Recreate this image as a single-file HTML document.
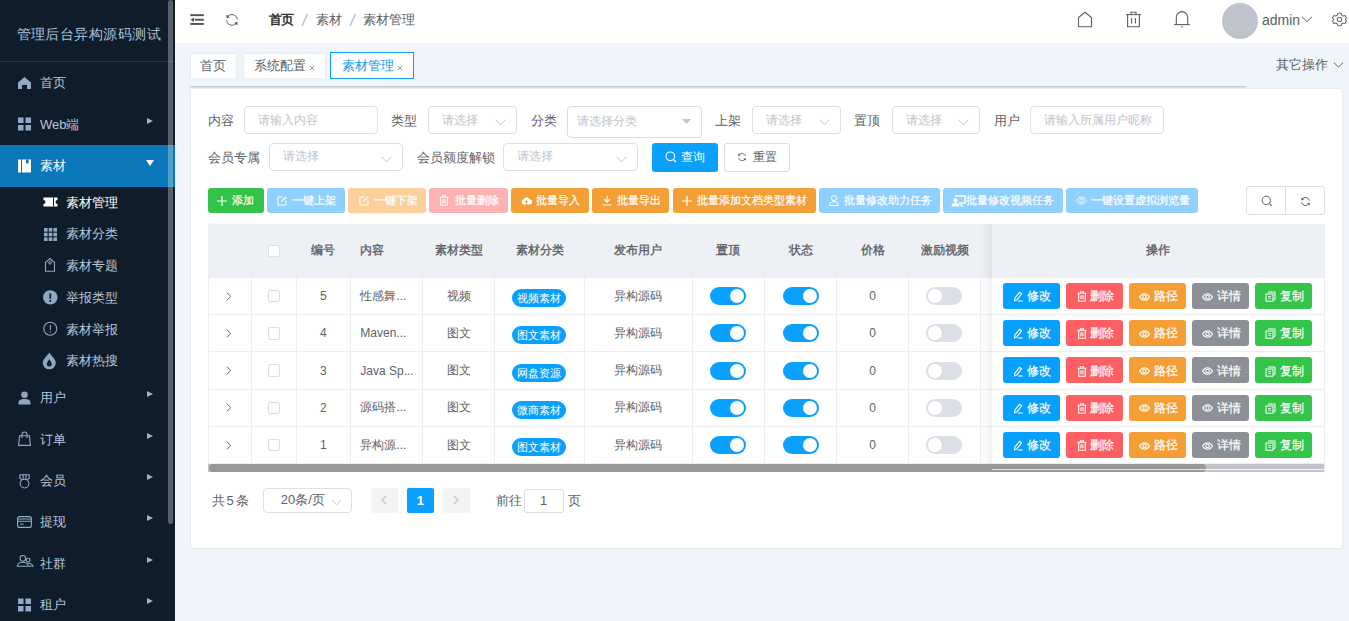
<!DOCTYPE html>
<html><head><meta charset="utf-8">
<style>
*{box-sizing:border-box;margin:0;padding:0}
html,body{width:1349px;height:621px;overflow:hidden}
body{position:relative;background:#f0f4fb;font-family:"Liberation Sans",sans-serif;font-size:13px;color:#606266}
.a{position:absolute}
.c{display:flex;align-items:center;justify-content:center}
.side{left:0;top:0;width:175px;height:621px;background:#0f1c2a}
.logo{left:0;top:20px;width:175px;height:28px;line-height:28px;padding-left:16.5px;font-size:14px;letter-spacing:0.45px;color:#adc3da;white-space:nowrap}
.divl{left:0;top:61px;width:175px;height:1px;background:#1e384e}
.mi{left:0;width:175px;height:41.4px;color:#b6c7d9;font-size:13px}
.mi .t{position:absolute;left:40px;top:0;height:100%;line-height:41.4px;white-space:nowrap}
.mi .ic{position:absolute;left:17px;top:50%;width:15px;height:14px;margin-top:-7px}
.mi .tri{position:absolute;left:146.5px;top:50%;width:0;height:0;margin-top:-6.5px;border-top:3.6px solid transparent;border-bottom:3.6px solid transparent;border-left:6px solid #9fb3c8}
.mi.act{background:#0a77bb;color:#fff}
.mi.act .tri{margin-top:-6px;border-left:4px solid transparent;border-right:4px solid transparent;border-top:6px solid #fff;border-bottom:0;left:146px}
.si{left:0;width:175px;height:31.75px;color:#b6c7d9;font-size:13px}
.si .t{position:absolute;left:65.5px;top:0;height:100%;line-height:31.75px;white-space:nowrap}
.si .ic{position:absolute;left:42.5px;top:50%;width:15px;height:14px;margin-top:-7px}
.si.act{color:#fff}
.sb{left:168px;top:0;width:5.2px;height:524px;border-radius:2.6px;background:rgba(255,255,255,0.3)}
.hdr{left:175px;top:0;width:1174px;height:43px;background:#fff}
.card{left:189.5px;top:88px;width:1153.7px;height:461px;background:#fff;border:1px solid #e8ecf2;border-radius:2px}
.bc span{color:#606266}.bc .sep{color:#c0c4cc;margin:0 7.5px;font-weight:normal}
.tg{background:#fff;border:1px solid #e9ecf0;color:#5a5e66;font-size:13px;display:flex;align-items:center;justify-content:center;white-space:nowrap}
.tg .x{margin-left:3px;margin-top:5px}
.tg.on{border-color:#0f9bf5;color:#0f9bf5}
.lb{height:18px;line-height:18px;margin-top:0.5px;font-size:13px;color:#606266;white-space:nowrap}
.inp{border:1px solid #dcdfe6;border-radius:4px;background:#fff;font-size:12px;color:#c0c4cc;white-space:nowrap;display:flex;align-items:center}
.inp span{padding-left:13px}
.inp.cas{border-color:#dcdcdc}
.inp .chev{position:absolute;right:10px;top:50%;margin-top:-1px}
.btn{font-size:12px;white-space:nowrap}
.tb{top:188.4px;height:24.4px;border-radius:3px;color:#fff;font-size:11px;white-space:nowrap}
.hl{height:1px;background:#ebeef5}
.vl{width:1px;background:#ebeef5}
.th{font-size:12px;font-weight:normal;color:#5c5f66;-webkit-text-stroke:0.35px #5c5f66;white-space:nowrap}
.td{font-size:12px;color:#606266;white-space:nowrap}
.cb{display:inline-block;width:12.5px;height:12.5px;border:1px solid #dcdfe6;border-radius:2px;background:#fff}
.pill{display:inline-block;height:18px;line-height:18px;padding:0 5px;border-radius:9px;background:#0aa1fe;color:#fff;font-size:11px;margin-top:4px;margin-left:-2px}
.sw{display:inline-block;position:relative;width:36px;height:18px;border-radius:9px;background:#dcdfe6}
.sw i{position:absolute;left:2px;top:2px;width:14px;height:14px;border-radius:50%;background:#fff}
.sw.on{background:#0aa1fe}.sw.on i{left:20px}
.ob{width:57px;height:26px;border-radius:3px;color:#fff;font-size:11.5px;white-space:nowrap;padding-top:1.5px}
.tb,.ob{-webkit-text-stroke:0.2px #fff}
</style></head><body>
<div class="a side">
  <div class="a logo">管理后台异构源码测试</div>
  <div class="a divl"></div>
<div class="a mi" style="top:62.4px"><svg class="ic" viewBox="0 0 15 14"><path d="M7.5 1 L14 6.5 V13 H10 V9 H5 V13 H1 V6.5 Z" fill="#8ea9c3"/></svg><span class="t">首页</span></div>
<div class="a mi" style="top:103.8px"><svg class="ic" viewBox="0 0 15 14"><rect x="1" y="0.5" width="5.5" height="5.5" fill="#8ea9c3"/><rect x="8.5" y="0.5" width="5.5" height="5.5" fill="#8ea9c3"/><rect x="1" y="8" width="5.5" height="5.5" fill="#8ea9c3"/><rect x="8.5" y="8" width="5.5" height="5.5" fill="#8ea9c3"/></svg><span class="t">Web端</span><span class="tri"></span></div>
<div class="a mi act" style="top:145.2px"><svg class="ic" viewBox="0 0 15 14"><rect x="1" y="0.5" width="3" height="13" fill="#fff"/><rect x="5" y="0.5" width="9" height="13" fill="#fff"/><path d="M9 0.5 V5 L10.3 3.8 L11.6 5 V0.5 Z" fill="#0a77bb"/></svg><span class="t">素材</span><span class="tri"></span></div>
<div class="a si act" style="top:186.6px"><svg class="ic" viewBox="0 0 15 14"><path d="M0.5 2.5 H14.5 V5 A2 2 0 0 0 14.5 9 V11.5 H0.5 V9 A2 2 0 0 0 0.5 5 Z" fill="#fff"/><rect x="10" y="2.5" width="1" height="9" fill="#0f1c2a"/></svg><span class="t">素材管理</span></div>
<div class="a si" style="top:218.35px"><svg class="ic" viewBox="0 0 15 14"><g fill="#8ea9c3"><rect x="1" y="1" width="3.6" height="3.6"/><rect x="5.7" y="1" width="3.6" height="3.6"/><rect x="10.4" y="1" width="3.6" height="3.6"/><rect x="1" y="5.7" width="3.6" height="3.6"/><rect x="5.7" y="5.7" width="3.6" height="3.6"/><rect x="10.4" y="5.7" width="3.6" height="3.6"/><rect x="1" y="10.4" width="3.6" height="3.6"/><rect x="5.7" y="10.4" width="3.6" height="3.6"/><rect x="10.4" y="10.4" width="3.6" height="3.6"/></g></svg><span class="t">素材分类</span></div>
<div class="a si" style="top:250.1px"><svg class="ic" viewBox="0 0 15 14" style="overflow:visible"><path d="M2.5 12.3 V3.5 L7 -0.5 L11.5 3.5 V12.3 Z" fill="none" stroke="#8ea9c3" stroke-width="1.1"/><circle cx="7" cy="3.8" r="1.3" fill="none" stroke="#8ea9c3" stroke-width="1"/></svg><span class="t">素材专题</span></div>
<div class="a si" style="top:281.85px"><svg class="ic" viewBox="0 0 15 14" style="overflow:visible"><circle cx="7.3" cy="6.4" r="7.2" fill="#8ea9c3"/><rect x="6.4" y="2.4" width="1.8" height="5.4" fill="#0f1c2a"/><rect x="6.4" y="9" width="1.8" height="1.8" fill="#0f1c2a"/></svg><span class="t">举报类型</span></div>
<div class="a si" style="top:313.6px"><svg class="ic" viewBox="0 0 15 14" style="overflow:visible"><circle cx="7.3" cy="6.8" r="6.5" fill="none" stroke="#8ea9c3" stroke-width="1.1"/><rect x="6.8" y="3" width="1.1" height="5" fill="#8ea9c3"/><rect x="6.8" y="9.2" width="1.1" height="1.3" fill="#8ea9c3"/></svg><span class="t">素材举报</span></div>
<div class="a si" style="top:345.35px"><svg class="ic" viewBox="0 0 15 14" style="overflow:visible"><path d="M6.3 -1.5 C8 1.5 12.8 5 12.8 9 A6.5 6.3 0 0 1 -0.2 9 C-0.2 5 4.6 1.5 6.3 -1.5 Z" fill="#8ea9c3"/><path d="M6.3 5.2 C7.3 7 8.8 8.3 8.8 10 A2.5 2.5 0 0 1 3.8 10 C3.8 8.3 5.3 7 6.3 5.2Z" fill="#0f1c2a"/></svg><span class="t">素材热搜</span></div>
<div class="a mi" style="top:377.1px"><svg class="ic" viewBox="0 0 15 14"><circle cx="7.5" cy="3.8" r="3.3" fill="#8ea9c3"/><path d="M1.5 13.5 V11.5 C1.5 9 4 8 7.5 8 C11 8 13.5 9 13.5 11.5 V13.5 Z" fill="#8ea9c3"/></svg><span class="t">用户</span><span class="tri"></span></div>
<div class="a mi" style="top:418.5px"><svg class="ic" viewBox="0 0 15 14" style="overflow:visible"><path d="M2.6 3.8 H12.4 L13.4 13.4 H1.6 Z" fill="none" stroke="#8ea9c3" stroke-width="1.1" stroke-linejoin="round"/><path d="M5 6 V2.6 A2.5 2.6 0 0 1 10 2.6 V6" fill="none" stroke="#8ea9c3" stroke-width="1.1"/></svg><span class="t">订单</span><span class="tri"></span></div>
<div class="a mi" style="top:459.9px"><svg class="ic" viewBox="0 0 15 14" style="overflow:visible"><path d="M2.8 0.8 H12.2 V4.2 L9.8 6.2 M2.8 0.8 V4.2 L5.2 6.2 M6.1 0.8 V5 M8.9 0.8 V5" fill="none" stroke="#8ea9c3" stroke-width="1.1"/><circle cx="7.5" cy="9.6" r="4.4" fill="none" stroke="#8ea9c3" stroke-width="1.1"/></svg><span class="t">会员</span><span class="tri"></span></div>
<div class="a mi" style="top:501.3px"><svg class="ic" viewBox="0 0 15 14" style="overflow:visible"><rect x="0.6" y="1.6" width="13.8" height="10.8" rx="2" fill="none" stroke="#8ea9c3" stroke-width="1.1"/><path d="M0.6 4 H14.4 M0.6 6.3 H14.4 M3 9.1 H6.5" stroke="#8ea9c3" stroke-width="1"/></svg><span class="t">提现</span><span class="tri"></span></div>
<div class="a mi" style="top:542.7px"><svg class="ic" viewBox="0 0 15 14" style="overflow:visible"><circle cx="5.8" cy="2.3" r="2.8" fill="none" stroke="#8ea9c3" stroke-width="1.1"/><path d="M0.2 10.2 C0.8 7.4 3 6.3 5.8 6.3 C8.6 6.3 10.8 7.4 11.4 10.2 Z" fill="none" stroke="#8ea9c3" stroke-width="1.1" stroke-linejoin="round"/><circle cx="11.2" cy="4.2" r="1.9" fill="none" stroke="#8ea9c3" stroke-width="1.1"/><path d="M11 7.3 C13.6 7.5 15.4 8.5 15.9 10.2 H12" fill="none" stroke="#8ea9c3" stroke-width="1.1"/></svg><span class="t">社群</span><span class="tri"></span></div>
<div class="a mi" style="top:584.1px"><svg class="ic" viewBox="0 0 15 14"><rect x="1" y="0.5" width="5.5" height="5.5" fill="#8ea9c3"/><rect x="8.5" y="0.5" width="5.5" height="5.5" fill="#8ea9c3"/><rect x="1" y="8" width="5.5" height="5.5" fill="#8ea9c3"/><rect x="8.5" y="8" width="5.5" height="5.5" fill="#8ea9c3"/></svg><span class="t">租户</span><span class="tri"></span></div>
<div class="a sb"></div>
</div>
<div class="a hdr"></div>
<svg class="a" style="left:189px;top:12px" width="16" height="15" viewBox="0 0 16 15"><g fill="#505359"><rect x="1.3" y="2.2" width="13.5" height="1.9"/><rect x="5.7" y="6.8" width="9.1" height="1.9"/><rect x="1.3" y="11" width="13.5" height="1.9"/><path d="M1.5 7.75 L5 5.5 V10 Z"/></g></svg>
<svg class="a" style="left:224px;top:12px" width="16" height="16" viewBox="0 0 16 16"><g fill="none" stroke="#5a5d63" stroke-width="0.95"><path d="M3.4 4.6 A5.8 5.8 0 0 1 13.6 7.4"/><path d="M12.6 11.2 A5.8 5.8 0 0 1 2.4 8.4"/></g><path d="M2.4 2.6 L2.6 6.2 L5.9 5.2 Z" fill="#5a5d63"/><path d="M13.6 13.4 L13.4 9.8 L10.1 10.8 Z" fill="#5a5d63"/></svg>
<div class="a" style="left:268.5px;top:11px;height:18px;line-height:18px;font-size:13px;color:#303133;font-weight:bold;letter-spacing:-0.5px">首页</div>
<svg class="a" style="left:300px;top:13px" width="10" height="14" viewBox="0 0 10 14"><path d="M2 13 L7.5 1" stroke="#c0c4cc" stroke-width="1.6"/></svg>
<div class="a" style="left:315.5px;top:11px;height:18px;line-height:18px;font-size:13px;color:#606266">素材</div>
<svg class="a" style="left:347.5px;top:13px" width="10" height="14" viewBox="0 0 10 14"><path d="M2 13 L7.5 1" stroke="#c0c4cc" stroke-width="1.6"/></svg>
<div class="a" style="left:362.5px;top:11px;height:18px;line-height:18px;font-size:13px;color:#606266;white-space:nowrap">素材管理</div>
<svg class="a" style="left:1077px;top:11px" width="16" height="17" viewBox="0 0 16 17"><path d="M1.5 15.7 V6.5 L8 1.2 L14.5 6.5 V15.7 Z" fill="none" stroke="#5c5f66" stroke-width="1.1"/></svg>
<svg class="a" style="left:1125px;top:11px" width="17" height="17" viewBox="0 0 17 17"><g fill="none" stroke="#5c5f66" stroke-width="1.1"><path d="M1 3.6 H16"/><path d="M6 3.6 V1.3 H11 V3.6"/><path d="M2.6 3.6 V15.7 H14.4 V3.6"/><path d="M6.6 7 V12.5 M10.4 7 V12.5"/></g></svg>
<svg class="a" style="left:1173px;top:10px" width="18" height="18" viewBox="0 0 18 18"><g fill="none" stroke="#5c5f66" stroke-width="1.1"><path d="M3.3 14.6 V7.5 A5.7 5.9 0 0 1 14.7 7.5 V14.6"/><path d="M1.2 14.6 H16.8"/><path d="M9 0.8 V1.8"/></g><rect x="8.3" y="16.2" width="1.4" height="1.2" fill="#5c5f66"/></svg>
<div class="a" style="left:1221.6px;top:3px;width:36px;height:36px;border-radius:50%;background:#bfc3cb"></div>
<div class="a" style="left:1262px;top:10px;height:20px;line-height:20px;font-size:14px;color:#5a5e66">admin</div>
<svg class="a" style="left:1301px;top:15px" width="12" height="8" viewBox="0 0 12 8"><path d="M1 1.8 L6 6.6 L11 1.8" fill="none" stroke="#606266" stroke-width="1"/></svg>
<svg class="a" style="left:1332px;top:12px" width="15" height="15" viewBox="0 0 15 15"><path fill="none" stroke="#6a6d73" stroke-width="1.1" stroke-linejoin="round" d="M6 1.2 H9 L9.6 3.1 L11.2 4 L13.1 3.5 L14.5 6 L13.2 7.5 L14.5 9 L13.1 11.5 L11.2 11 L9.6 11.9 L9 13.8 H6 L5.4 11.9 L3.8 11 L1.9 11.5 L0.5 9 L1.8 7.5 L0.5 6 L1.9 3.5 L3.8 4 L5.4 3.1 Z"/><circle cx="7.5" cy="7.5" r="2.2" fill="none" stroke="#6a6d73" stroke-width="1.1"/></svg>
<!-- tags -->
<div class="a tg" style="left:189.6px;top:52.5px;width:47px;height:26px">首页</div>
<div class="a tg" style="left:242.6px;top:52.5px;width:83px;height:26px;padding-left:1px">系统配置<svg class="x" width="6" height="6" viewBox="0 0 6 6"><path d="M1 1 L5 5 M5 1 L1 5" stroke="#8c9099" stroke-width="0.9"/></svg></div>
<div class="a tg on" style="left:330px;top:52px;width:84px;height:27px;padding-left:1px">素材管理<svg class="x" width="6" height="6" viewBox="0 0 6 6"><path d="M1 1 L5 5 M5 1 L1 5" stroke="#8c9099" stroke-width="0.9"/></svg></div>
<div class="a" style="left:189.5px;top:85.5px;width:1056.5px;height:1px;background:#c6c9cf"></div><div class="a" style="left:189.5px;top:86.5px;width:1056.5px;height:1px;background:#dcdfe4"></div>
<div class="a" style="left:1276px;top:56px;height:18px;line-height:18px;font-size:13px;color:#5a5e66;white-space:nowrap">其它操作<svg style="position:absolute;left:57px;top:5px" width="11" height="8" viewBox="0 0 11 8"><path d="M1 1.8 L5.5 6 L10 1.8" fill="none" stroke="#606266" stroke-width="1"/></svg></div>
<div class="a card"></div>
<div class="a lb" style="left:207.5px;top:111px">内容</div>
<div class="a inp" style="left:244.2px;top:106.3px;width:134.2px;height:28.1px"><span>请输入内容</span></div>
<div class="a lb" style="left:391px;top:111px">类型</div>
<div class="a inp" style="left:428.4px;top:106.3px;width:88.9px;height:28.1px"><span>请选择</span><svg class="chev" width="11" height="7" viewBox="0 0 11 7"><path d="M0.7 0.7 L5.5 5.8 L10.3 0.7" fill="none" stroke="#c0c4cc" stroke-width="1"/></svg></div>
<div class="a lb" style="left:530.5px;top:111px">分类</div>
<div class="a inp cas" style="left:567.4px;top:106.2px;width:134.4px;height:31.5px"><span style="padding-left:9px">请选择分类</span><svg class="chev" style="right:10px;margin-top:-2.5px" width="9" height="5" viewBox="0 0 9 5"><path d="M0 0 H9 L4.5 5 Z" fill="#c0c4cc"/></svg></div>
<div class="a lb" style="left:715px;top:111px">上架</div>
<div class="a inp" style="left:751.6px;top:106.3px;width:89.0px;height:28.1px"><span>请选择</span><svg class="chev" width="11" height="7" viewBox="0 0 11 7"><path d="M0.7 0.7 L5.5 5.8 L10.3 0.7" fill="none" stroke="#c0c4cc" stroke-width="1"/></svg></div>
<div class="a lb" style="left:854px;top:111px">置顶</div>
<div class="a inp" style="left:891.5px;top:106.3px;width:88.9px;height:28.1px"><span>请选择</span><svg class="chev" width="11" height="7" viewBox="0 0 11 7"><path d="M0.7 0.7 L5.5 5.8 L10.3 0.7" fill="none" stroke="#c0c4cc" stroke-width="1"/></svg></div>
<div class="a lb" style="left:993.5px;top:111px">用户</div>
<div class="a inp" style="left:1030.2px;top:106.3px;width:134.2px;height:28.1px"><span>请输入所属用户昵称</span></div>
<div class="a lb" style="left:207.5px;top:148px">会员专属</div>
<div class="a inp" style="left:269.3px;top:143.3px;width:134.2px;height:27.3px"><span>请选择</span><svg class="chev" width="11" height="7" viewBox="0 0 11 7"><path d="M0.7 0.7 L5.5 5.8 L10.3 0.7" fill="none" stroke="#c0c4cc" stroke-width="1"/></svg></div>
<div class="a lb" style="left:417px;top:148px">会员额度解锁</div>
<div class="a inp" style="left:503.2px;top:143.3px;width:134.6px;height:27.3px"><span>请选择</span><svg class="chev" width="11" height="7" viewBox="0 0 11 7"><path d="M0.7 0.7 L5.5 5.8 L10.3 0.7" fill="none" stroke="#c0c4cc" stroke-width="1"/></svg></div>
<div class="a btn c" style="left:652px;top:143px;width:66px;height:28.5px;background:#0aa1fe;color:#fff;border-radius:3px"><svg width="12" height="12" viewBox="0 0 12 12" style="margin-right:4.5px"><circle cx="5.3" cy="5.3" r="4.3" fill="none" stroke="#fff" stroke-width="1.1"/><path d="M8.4 8.4 L11 11" stroke="#fff" stroke-width="1.2"/></svg>查询</div>
<div class="a btn c" style="left:724px;top:143px;width:66px;height:28.5px;background:#fff;color:#606266;border:1px solid #dcdfe6;border-radius:3px"><svg width="10" height="10" viewBox="0 0 10 10" style="margin-right:5.5px"><g fill="none" stroke="#606266" stroke-width="0.9"><path d="M1.8 3 A3.8 3.8 0 0 1 8.6 4.2"/><path d="M8.2 7 A3.8 3.8 0 0 1 1.4 5.8"/></g><path d="M1 1.3 L1.4 4 L3.7 3.2Z M9 8.7 L8.6 6 L6.3 6.8Z" fill="#606266"/></svg>重置</div>
<div class="a tb c" style="left:208.3px;width:55.3px;background:#34c34a"><svg width="10" height="10" viewBox="0 0 10 10" style="margin-right:5px"><path d="M5 0 V10 M0 5 H10" stroke="#fff" stroke-width="1.2"/></svg>添加</div>
<div class="a tb c" style="left:267.1px;width:78.3px;background:#90d0fe"><svg width="10" height="10" viewBox="0 0 10 10" style="margin-right:5px;margin-left:1.5px"><path d="M5.5 1 H1 V9 H9 V4.5" fill="none" stroke="#fff" stroke-width="1"/><path d="M4.3 5.7 L9 1" stroke="#fff" stroke-width="1.2"/></svg>一键上架</div>
<div class="a tb c" style="left:348.3px;width:78.2px;background:#fbd09c"><svg width="10" height="10" viewBox="0 0 10 10" style="margin-right:5px;margin-left:1.5px"><path d="M5.5 1 H1 V9 H9 V4.5" fill="none" stroke="#fff" stroke-width="1"/><path d="M4.3 5.7 L9 1" stroke="#fff" stroke-width="1.2"/></svg>一键下架</div>
<div class="a tb c" style="left:429.4px;width:78.3px;background:#fdb2b4"><svg width="10" height="11" viewBox="0 0 10 11" style="margin-right:6px"><g fill="none" stroke="#fff" stroke-width="1"><path d="M0.5 2.2 H9.5 M3.5 2.2 V0.7 H6.5 V2.2 M1.7 2.2 V10.3 H8.3 V2.2 M4 4.2 V8.5 M6 4.2 V8.5"/></g></svg>批量删除</div>
<div class="a tb c" style="left:511.4px;width:77.3px;background:#f49e36"><svg width="11" height="9" viewBox="0 0 12 10" style="margin-right:4.5px;margin-left:0.5px"><path d="M3 9.5 A2.8 2.8 0 0 1 2.6 4 A3.6 3.6 0 0 1 9.4 3.6 A2.9 2.9 0 0 1 9.2 9.5 Z" fill="#fff"/><path d="M6 4.5 L4 6.6 H5.4 V9.5 H6.6 V6.6 H8 Z" fill="#f49e35"/></svg>批量导入</div>
<div class="a tb c" style="left:592px;width:77.4px;background:#f49e36"><svg width="10" height="11" viewBox="0 0 10 11" style="margin-right:5px;margin-left:1.5px"><path d="M5 0.5 V7 M2 4.2 L5 7.2 L8 4.2 M0.5 10 H9.5" fill="none" stroke="#fff" stroke-width="1.1"/></svg>批量导出</div>
<div class="a tb c" style="left:673.2px;width:142.5px;background:#f49e36"><svg width="10" height="10" viewBox="0 0 10 10" style="margin-right:5px"><path d="M5 0 V10 M0 5 H10" stroke="#fff" stroke-width="1.2"/></svg>批量添加文档类型素材</div>
<div class="a tb c" style="left:819px;width:120.8px;background:#90d0fe"><svg width="10" height="11" viewBox="0 0 10 11" style="margin-right:4.5px;margin-left:2px"><circle cx="5" cy="3.2" r="2.6" fill="none" stroke="#fff" stroke-width="1"/><path d="M0.7 10.5 C0.7 7.8 2.5 6.6 5 6.6 C7.5 6.6 9.3 7.8 9.3 10.5 Z" fill="none" stroke="#fff" stroke-width="1"/></svg>批量修改助力任务</div>
<div class="a tb c" style="left:943.3px;width:119.3px;background:#90d0fe"><svg width="15" height="12" viewBox="0 0 15 12" style="margin-right:0px"><path d="M4 1 H14 V8 H8" fill="none" stroke="#fff" stroke-width="1.5"/><circle cx="4.5" cy="5.3" r="2.2" fill="#fff"/><path d="M0.5 11.5 C0.5 8.8 2 8 4.5 8 C7 8 8.5 8.8 8.5 11.5 Z" fill="#fff"/><path d="M10 8 V11 H13" fill="none" stroke="#fff" stroke-width="1.2"/></svg>批量修改视频任务</div>
<div class="a tb c" style="left:1066.2px;width:131.6px;background:#90d0fe"><svg width="11" height="9" viewBox="0 0 12 10" style="margin-right:4.5px;margin-left:2px"><path d="M0.6 5 C2 2 4 1.2 6 1.2 C8 1.2 10 2 11.4 5 C10 8 8 8.8 6 8.8 C4 8.8 2 8 0.6 5 Z" fill="none" stroke="#fff" stroke-width="1"/><circle cx="6" cy="5" r="2" fill="none" stroke="#fff" stroke-width="1"/></svg>一键设置虚拟浏览量</div>
<div class="a" style="left:1246.4px;top:186.2px;width:78.4px;height:28.4px;border:1px solid #dcdfe6;border-radius:3px"><div class="a" style="left:38px;top:0;width:1px;height:100%;background:#dcdfe6"></div><svg class="a" style="left:14px;top:8px" width="12" height="12" viewBox="0 0 12 12"><circle cx="5.3" cy="5.3" r="4.2" fill="none" stroke="#606266" stroke-width="1"/><path d="M8.3 8.3 L10.8 10.8" stroke="#606266" stroke-width="1.1"/></svg><svg class="a" style="left:53px;top:8.5px" width="11" height="11" viewBox="0 0 10 10"><g fill="none" stroke="#606266" stroke-width="0.9"><path d="M1.8 3 A3.8 3.8 0 0 1 8.6 4.2"/><path d="M8.2 7 A3.8 3.8 0 0 1 1.4 5.8"/></g><path d="M1 1.3 L1.4 4 L3.7 3.2Z M9 8.7 L8.6 6 L6.3 6.8Z" fill="#606266"/></svg></div>
<div class="a" style="left:208.2px;top:224.3px;width:1116.3px;height:53.2px;background:#edf0f5"></div>
<div class="a hl" style="left:208.2px;top:277.00px;width:1116.3px"></div>
<div class="a hl" style="left:208.2px;top:314.24px;width:1116.3px"></div>
<div class="a hl" style="left:208.2px;top:351.48px;width:1116.3px"></div>
<div class="a hl" style="left:208.2px;top:388.72px;width:1116.3px"></div>
<div class="a hl" style="left:208.2px;top:425.96px;width:1116.3px"></div>
<div class="a hl" style="left:208.2px;top:463.20px;width:1116.3px"></div>
<div class="a vl" style="left:251.10px;top:224.3px;height:239.4px"></div>
<div class="a vl" style="left:295.80px;top:224.3px;height:239.4px"></div>
<div class="a vl" style="left:349.80px;top:224.3px;height:239.4px"></div>
<div class="a vl" style="left:421.90px;top:224.3px;height:239.4px"></div>
<div class="a vl" style="left:494.20px;top:224.3px;height:239.4px"></div>
<div class="a vl" style="left:584.00px;top:224.3px;height:239.4px"></div>
<div class="a vl" style="left:691.90px;top:224.3px;height:239.4px"></div>
<div class="a vl" style="left:764.10px;top:224.3px;height:239.4px"></div>
<div class="a vl" style="left:836.20px;top:224.3px;height:239.4px"></div>
<div class="a vl" style="left:908.10px;top:224.3px;height:239.4px"></div>
<div class="a vl" style="left:980.10px;top:224.3px;height:239.4px"></div>
<div class="a vl" style="left:1059.50px;top:224.3px;height:239.4px"></div>
<div class="a vl" style="left:1139.50px;top:224.3px;height:239.4px"></div>
<div class="a vl" style="left:207.70px;top:277.5px;height:186.2px"></div>
<div class="a th c" style="left:208.2px;top:224.30px;width:43.4px;height:53.20px"></div>
<div class="a th c" style="left:251.6px;top:224.30px;width:44.7px;height:53.20px"><span class="cb"></span></div>
<div class="a th c" style="left:296.3px;top:224.30px;width:54.0px;height:53.20px">编号</div>
<div class="a th" style="left:360.3px;top:224.30px;width:62.1px;height:53.20px;display:flex;align-items:center">内容</div>
<div class="a th c" style="left:422.4px;top:224.30px;width:72.3px;height:53.20px">素材类型</div>
<div class="a th c" style="left:494.7px;top:224.30px;width:89.8px;height:53.20px">素材分类</div>
<div class="a th c" style="left:584.5px;top:224.30px;width:107.9px;height:53.20px">发布用户</div>
<div class="a th c" style="left:692.4px;top:224.30px;width:72.2px;height:53.20px">置顶</div>
<div class="a th c" style="left:764.6px;top:224.30px;width:72.1px;height:53.20px">状态</div>
<div class="a th c" style="left:836.7px;top:224.30px;width:71.9px;height:53.20px">价格</div>
<div class="a th c" style="left:908.6px;top:224.30px;width:72.0px;height:53.20px">激励视频</div>
<div class="a td c" style="left:208.2px;top:277.50px;width:43.4px;height:37.24px"><svg width="6" height="9" viewBox="0 0 6 9" style="margin-left:-2px"><path d="M0.8 0.8 L4.8 4.5 L0.8 8.2" fill="none" stroke="#606266" stroke-width="0.9"/></svg></div>
<div class="a td c" style="left:251.6px;top:277.50px;width:44.7px;height:37.24px"><span class="cb"></span></div>
<div class="a td c" style="left:296.3px;top:277.50px;width:54.0px;height:37.24px">5</div>
<div class="a td" style="left:360.3px;top:277.50px;width:62.1px;height:37.24px;display:flex;align-items:center">性感舞...</div>
<div class="a td c" style="left:422.4px;top:277.50px;width:72.3px;height:37.24px">视频</div>
<div class="a td c" style="left:494.7px;top:277.50px;width:89.8px;height:37.24px"><span class="pill">视频素材</span></div>
<div class="a td c" style="left:584.5px;top:277.50px;width:107.9px;height:37.24px">异构源码</div>
<div class="a td c" style="left:692.4px;top:277.50px;width:72.2px;height:37.24px"><span class="sw on"><i></i></span></div>
<div class="a td c" style="left:764.6px;top:277.50px;width:72.1px;height:37.24px"><span class="sw on"><i></i></span></div>
<div class="a td c" style="left:836.7px;top:277.50px;width:71.9px;height:37.24px">0</div>
<div class="a td c" style="left:908.6px;top:277.50px;width:72.0px;height:37.24px"><span class="sw" style="margin-left:-2px"><i></i></span></div>
<div class="a td c" style="left:208.2px;top:314.74px;width:43.4px;height:37.24px"><svg width="6" height="9" viewBox="0 0 6 9" style="margin-left:-2px"><path d="M0.8 0.8 L4.8 4.5 L0.8 8.2" fill="none" stroke="#606266" stroke-width="0.9"/></svg></div>
<div class="a td c" style="left:251.6px;top:314.74px;width:44.7px;height:37.24px"><span class="cb"></span></div>
<div class="a td c" style="left:296.3px;top:314.74px;width:54.0px;height:37.24px">4</div>
<div class="a td" style="left:360.3px;top:314.74px;width:62.1px;height:37.24px;display:flex;align-items:center">Maven...</div>
<div class="a td c" style="left:422.4px;top:314.74px;width:72.3px;height:37.24px">图文</div>
<div class="a td c" style="left:494.7px;top:314.74px;width:89.8px;height:37.24px"><span class="pill">图文素材</span></div>
<div class="a td c" style="left:584.5px;top:314.74px;width:107.9px;height:37.24px">异构源码</div>
<div class="a td c" style="left:692.4px;top:314.74px;width:72.2px;height:37.24px"><span class="sw on"><i></i></span></div>
<div class="a td c" style="left:764.6px;top:314.74px;width:72.1px;height:37.24px"><span class="sw on"><i></i></span></div>
<div class="a td c" style="left:836.7px;top:314.74px;width:71.9px;height:37.24px">0</div>
<div class="a td c" style="left:908.6px;top:314.74px;width:72.0px;height:37.24px"><span class="sw" style="margin-left:-2px"><i></i></span></div>
<div class="a td c" style="left:208.2px;top:351.98px;width:43.4px;height:37.24px"><svg width="6" height="9" viewBox="0 0 6 9" style="margin-left:-2px"><path d="M0.8 0.8 L4.8 4.5 L0.8 8.2" fill="none" stroke="#606266" stroke-width="0.9"/></svg></div>
<div class="a td c" style="left:251.6px;top:351.98px;width:44.7px;height:37.24px"><span class="cb"></span></div>
<div class="a td c" style="left:296.3px;top:351.98px;width:54.0px;height:37.24px">3</div>
<div class="a td" style="left:360.3px;top:351.98px;width:62.1px;height:37.24px;display:flex;align-items:center">Java Sp...</div>
<div class="a td c" style="left:422.4px;top:351.98px;width:72.3px;height:37.24px">图文</div>
<div class="a td c" style="left:494.7px;top:351.98px;width:89.8px;height:37.24px"><span class="pill">网盘资源</span></div>
<div class="a td c" style="left:584.5px;top:351.98px;width:107.9px;height:37.24px">异构源码</div>
<div class="a td c" style="left:692.4px;top:351.98px;width:72.2px;height:37.24px"><span class="sw on"><i></i></span></div>
<div class="a td c" style="left:764.6px;top:351.98px;width:72.1px;height:37.24px"><span class="sw on"><i></i></span></div>
<div class="a td c" style="left:836.7px;top:351.98px;width:71.9px;height:37.24px">0</div>
<div class="a td c" style="left:908.6px;top:351.98px;width:72.0px;height:37.24px"><span class="sw" style="margin-left:-2px"><i></i></span></div>
<div class="a td c" style="left:208.2px;top:389.22px;width:43.4px;height:37.24px"><svg width="6" height="9" viewBox="0 0 6 9" style="margin-left:-2px"><path d="M0.8 0.8 L4.8 4.5 L0.8 8.2" fill="none" stroke="#606266" stroke-width="0.9"/></svg></div>
<div class="a td c" style="left:251.6px;top:389.22px;width:44.7px;height:37.24px"><span class="cb"></span></div>
<div class="a td c" style="left:296.3px;top:389.22px;width:54.0px;height:37.24px">2</div>
<div class="a td" style="left:360.3px;top:389.22px;width:62.1px;height:37.24px;display:flex;align-items:center">源码搭...</div>
<div class="a td c" style="left:422.4px;top:389.22px;width:72.3px;height:37.24px">图文</div>
<div class="a td c" style="left:494.7px;top:389.22px;width:89.8px;height:37.24px"><span class="pill">微商素材</span></div>
<div class="a td c" style="left:584.5px;top:389.22px;width:107.9px;height:37.24px">异构源码</div>
<div class="a td c" style="left:692.4px;top:389.22px;width:72.2px;height:37.24px"><span class="sw on"><i></i></span></div>
<div class="a td c" style="left:764.6px;top:389.22px;width:72.1px;height:37.24px"><span class="sw on"><i></i></span></div>
<div class="a td c" style="left:836.7px;top:389.22px;width:71.9px;height:37.24px">0</div>
<div class="a td c" style="left:908.6px;top:389.22px;width:72.0px;height:37.24px"><span class="sw" style="margin-left:-2px"><i></i></span></div>
<div class="a td c" style="left:208.2px;top:426.46px;width:43.4px;height:37.24px"><svg width="6" height="9" viewBox="0 0 6 9" style="margin-left:-2px"><path d="M0.8 0.8 L4.8 4.5 L0.8 8.2" fill="none" stroke="#606266" stroke-width="0.9"/></svg></div>
<div class="a td c" style="left:251.6px;top:426.46px;width:44.7px;height:37.24px"><span class="cb"></span></div>
<div class="a td c" style="left:296.3px;top:426.46px;width:54.0px;height:37.24px">1</div>
<div class="a td" style="left:360.3px;top:426.46px;width:62.1px;height:37.24px;display:flex;align-items:center">异构源...</div>
<div class="a td c" style="left:422.4px;top:426.46px;width:72.3px;height:37.24px">图文</div>
<div class="a td c" style="left:494.7px;top:426.46px;width:89.8px;height:37.24px"><span class="pill">图文素材</span></div>
<div class="a td c" style="left:584.5px;top:426.46px;width:107.9px;height:37.24px">异构源码</div>
<div class="a td c" style="left:692.4px;top:426.46px;width:72.2px;height:37.24px"><span class="sw on"><i></i></span></div>
<div class="a td c" style="left:764.6px;top:426.46px;width:72.1px;height:37.24px"><span class="sw on"><i></i></span></div>
<div class="a td c" style="left:836.7px;top:426.46px;width:71.9px;height:37.24px">0</div>
<div class="a td c" style="left:908.6px;top:426.46px;width:72.0px;height:37.24px"><span class="sw" style="margin-left:-2px"><i></i></span></div>
<div class="a" style="left:992px;top:224.3px;width:332.5px;height:240.4px;background:#fff"></div>
<div class="a" style="left:981px;top:224.3px;width:11px;height:247.5px;background:linear-gradient(to right,rgba(0,0,0,0),rgba(0,0,0,0.06))"></div>
<div class="a" style="left:992px;top:224.3px;width:332.5px;height:53.2px;background:#edf0f5"></div>
<div class="a hl" style="left:992px;top:314.24px;width:332.5px"></div>
<div class="a hl" style="left:992px;top:351.48px;width:332.5px"></div>
<div class="a hl" style="left:992px;top:388.72px;width:332.5px"></div>
<div class="a hl" style="left:992px;top:425.96px;width:332.5px"></div>
<div class="a hl" style="left:992px;top:463.20px;width:332.5px"></div>
<div class="a hl" style="left:992px;top:277.00px;width:332.5px"></div>
<div class="a th c" style="left:992px;top:224.30px;width:332.5px;height:53.20px">操作</div>
<div class="a ob c" style="left:1002.8px;top:282.90px;background:#08a0fe"><svg width="11" height="11" viewBox="0 0 11 11" style="margin-right:3.5px;margin-left:1.5px"><path d="M1.6 9.8 L1.7 7.4 L6.6 1.2 L8.6 2.8 L3.7 9 Z" fill="none" stroke="#fff" stroke-width="1.1"/><path d="M5.2 10 H9.6" stroke="#fff" stroke-width="1.1"/></svg>修改</div>
<div class="a ob c" style="left:1066.1px;top:282.90px;background:#fe5f63"><svg width="10" height="11" viewBox="0 0 10 11" style="margin-right:3.5px;margin-left:1.5px"><g fill="none" stroke="#fff" stroke-width="1.1"><path d="M0.5 2.3 H9.5 M3.5 2.3 V0.8 H6.5 V2.3 M1.7 2.3 V10.3 H8.3 V2.3 M4 4.3 V8.3 M6 4.3 V8.3"/></g></svg>删除</div>
<div class="a ob c" style="left:1128.9px;top:282.90px;background:#f49e36"><svg width="11" height="8" viewBox="0 0 11 8" style="margin-right:4px;margin-left:1.5px"><path d="M0.6 4 C2 1.4 3.8 0.7 5.5 0.7 C7.2 0.7 9 1.4 10.4 4 C9 6.6 7.2 7.3 5.5 7.3 C3.8 7.3 2 6.6 0.6 4 Z" fill="none" stroke="#fff" stroke-width="1.1"/><circle cx="5.5" cy="4" r="1.8" fill="none" stroke="#fff" stroke-width="1.1"/></svg>路径</div>
<div class="a ob c" style="left:1192px;top:282.90px;background:#8e9097"><svg width="11" height="8" viewBox="0 0 11 8" style="margin-right:4px;margin-left:1.5px"><path d="M0.6 4 C2 1.4 3.8 0.7 5.5 0.7 C7.2 0.7 9 1.4 10.4 4 C9 6.6 7.2 7.3 5.5 7.3 C3.8 7.3 2 6.6 0.6 4 Z" fill="none" stroke="#fff" stroke-width="1.1"/><circle cx="5.5" cy="4" r="1.8" fill="none" stroke="#fff" stroke-width="1.1"/></svg>详情</div>
<div class="a ob c" style="left:1255px;top:282.90px;background:#35c44a"><svg width="11" height="11" viewBox="0 0 11 11" style="margin-right:4.5px;margin-left:1.5px"><path d="M3 1 H10 V8.5 H8.5" fill="none" stroke="#fff" stroke-width="1"/><rect x="1" y="3" width="7" height="7.2" fill="none" stroke="#fff" stroke-width="1"/><path d="M3 5.5 H6 M3 7.3 H6" stroke="#fff" stroke-width="0.8"/></svg>复制</div>
<div class="a ob c" style="left:1002.8px;top:320.14px;background:#08a0fe"><svg width="11" height="11" viewBox="0 0 11 11" style="margin-right:3.5px;margin-left:1.5px"><path d="M1.6 9.8 L1.7 7.4 L6.6 1.2 L8.6 2.8 L3.7 9 Z" fill="none" stroke="#fff" stroke-width="1.1"/><path d="M5.2 10 H9.6" stroke="#fff" stroke-width="1.1"/></svg>修改</div>
<div class="a ob c" style="left:1066.1px;top:320.14px;background:#fe5f63"><svg width="10" height="11" viewBox="0 0 10 11" style="margin-right:3.5px;margin-left:1.5px"><g fill="none" stroke="#fff" stroke-width="1.1"><path d="M0.5 2.3 H9.5 M3.5 2.3 V0.8 H6.5 V2.3 M1.7 2.3 V10.3 H8.3 V2.3 M4 4.3 V8.3 M6 4.3 V8.3"/></g></svg>删除</div>
<div class="a ob c" style="left:1128.9px;top:320.14px;background:#f49e36"><svg width="11" height="8" viewBox="0 0 11 8" style="margin-right:4px;margin-left:1.5px"><path d="M0.6 4 C2 1.4 3.8 0.7 5.5 0.7 C7.2 0.7 9 1.4 10.4 4 C9 6.6 7.2 7.3 5.5 7.3 C3.8 7.3 2 6.6 0.6 4 Z" fill="none" stroke="#fff" stroke-width="1.1"/><circle cx="5.5" cy="4" r="1.8" fill="none" stroke="#fff" stroke-width="1.1"/></svg>路径</div>
<div class="a ob c" style="left:1192px;top:320.14px;background:#8e9097"><svg width="11" height="8" viewBox="0 0 11 8" style="margin-right:4px;margin-left:1.5px"><path d="M0.6 4 C2 1.4 3.8 0.7 5.5 0.7 C7.2 0.7 9 1.4 10.4 4 C9 6.6 7.2 7.3 5.5 7.3 C3.8 7.3 2 6.6 0.6 4 Z" fill="none" stroke="#fff" stroke-width="1.1"/><circle cx="5.5" cy="4" r="1.8" fill="none" stroke="#fff" stroke-width="1.1"/></svg>详情</div>
<div class="a ob c" style="left:1255px;top:320.14px;background:#35c44a"><svg width="11" height="11" viewBox="0 0 11 11" style="margin-right:4.5px;margin-left:1.5px"><path d="M3 1 H10 V8.5 H8.5" fill="none" stroke="#fff" stroke-width="1"/><rect x="1" y="3" width="7" height="7.2" fill="none" stroke="#fff" stroke-width="1"/><path d="M3 5.5 H6 M3 7.3 H6" stroke="#fff" stroke-width="0.8"/></svg>复制</div>
<div class="a ob c" style="left:1002.8px;top:357.38px;background:#08a0fe"><svg width="11" height="11" viewBox="0 0 11 11" style="margin-right:3.5px;margin-left:1.5px"><path d="M1.6 9.8 L1.7 7.4 L6.6 1.2 L8.6 2.8 L3.7 9 Z" fill="none" stroke="#fff" stroke-width="1.1"/><path d="M5.2 10 H9.6" stroke="#fff" stroke-width="1.1"/></svg>修改</div>
<div class="a ob c" style="left:1066.1px;top:357.38px;background:#fe5f63"><svg width="10" height="11" viewBox="0 0 10 11" style="margin-right:3.5px;margin-left:1.5px"><g fill="none" stroke="#fff" stroke-width="1.1"><path d="M0.5 2.3 H9.5 M3.5 2.3 V0.8 H6.5 V2.3 M1.7 2.3 V10.3 H8.3 V2.3 M4 4.3 V8.3 M6 4.3 V8.3"/></g></svg>删除</div>
<div class="a ob c" style="left:1128.9px;top:357.38px;background:#f49e36"><svg width="11" height="8" viewBox="0 0 11 8" style="margin-right:4px;margin-left:1.5px"><path d="M0.6 4 C2 1.4 3.8 0.7 5.5 0.7 C7.2 0.7 9 1.4 10.4 4 C9 6.6 7.2 7.3 5.5 7.3 C3.8 7.3 2 6.6 0.6 4 Z" fill="none" stroke="#fff" stroke-width="1.1"/><circle cx="5.5" cy="4" r="1.8" fill="none" stroke="#fff" stroke-width="1.1"/></svg>路径</div>
<div class="a ob c" style="left:1192px;top:357.38px;background:#8e9097"><svg width="11" height="8" viewBox="0 0 11 8" style="margin-right:4px;margin-left:1.5px"><path d="M0.6 4 C2 1.4 3.8 0.7 5.5 0.7 C7.2 0.7 9 1.4 10.4 4 C9 6.6 7.2 7.3 5.5 7.3 C3.8 7.3 2 6.6 0.6 4 Z" fill="none" stroke="#fff" stroke-width="1.1"/><circle cx="5.5" cy="4" r="1.8" fill="none" stroke="#fff" stroke-width="1.1"/></svg>详情</div>
<div class="a ob c" style="left:1255px;top:357.38px;background:#35c44a"><svg width="11" height="11" viewBox="0 0 11 11" style="margin-right:4.5px;margin-left:1.5px"><path d="M3 1 H10 V8.5 H8.5" fill="none" stroke="#fff" stroke-width="1"/><rect x="1" y="3" width="7" height="7.2" fill="none" stroke="#fff" stroke-width="1"/><path d="M3 5.5 H6 M3 7.3 H6" stroke="#fff" stroke-width="0.8"/></svg>复制</div>
<div class="a ob c" style="left:1002.8px;top:394.62px;background:#08a0fe"><svg width="11" height="11" viewBox="0 0 11 11" style="margin-right:3.5px;margin-left:1.5px"><path d="M1.6 9.8 L1.7 7.4 L6.6 1.2 L8.6 2.8 L3.7 9 Z" fill="none" stroke="#fff" stroke-width="1.1"/><path d="M5.2 10 H9.6" stroke="#fff" stroke-width="1.1"/></svg>修改</div>
<div class="a ob c" style="left:1066.1px;top:394.62px;background:#fe5f63"><svg width="10" height="11" viewBox="0 0 10 11" style="margin-right:3.5px;margin-left:1.5px"><g fill="none" stroke="#fff" stroke-width="1.1"><path d="M0.5 2.3 H9.5 M3.5 2.3 V0.8 H6.5 V2.3 M1.7 2.3 V10.3 H8.3 V2.3 M4 4.3 V8.3 M6 4.3 V8.3"/></g></svg>删除</div>
<div class="a ob c" style="left:1128.9px;top:394.62px;background:#f49e36"><svg width="11" height="8" viewBox="0 0 11 8" style="margin-right:4px;margin-left:1.5px"><path d="M0.6 4 C2 1.4 3.8 0.7 5.5 0.7 C7.2 0.7 9 1.4 10.4 4 C9 6.6 7.2 7.3 5.5 7.3 C3.8 7.3 2 6.6 0.6 4 Z" fill="none" stroke="#fff" stroke-width="1.1"/><circle cx="5.5" cy="4" r="1.8" fill="none" stroke="#fff" stroke-width="1.1"/></svg>路径</div>
<div class="a ob c" style="left:1192px;top:394.62px;background:#8e9097"><svg width="11" height="8" viewBox="0 0 11 8" style="margin-right:4px;margin-left:1.5px"><path d="M0.6 4 C2 1.4 3.8 0.7 5.5 0.7 C7.2 0.7 9 1.4 10.4 4 C9 6.6 7.2 7.3 5.5 7.3 C3.8 7.3 2 6.6 0.6 4 Z" fill="none" stroke="#fff" stroke-width="1.1"/><circle cx="5.5" cy="4" r="1.8" fill="none" stroke="#fff" stroke-width="1.1"/></svg>详情</div>
<div class="a ob c" style="left:1255px;top:394.62px;background:#35c44a"><svg width="11" height="11" viewBox="0 0 11 11" style="margin-right:4.5px;margin-left:1.5px"><path d="M3 1 H10 V8.5 H8.5" fill="none" stroke="#fff" stroke-width="1"/><rect x="1" y="3" width="7" height="7.2" fill="none" stroke="#fff" stroke-width="1"/><path d="M3 5.5 H6 M3 7.3 H6" stroke="#fff" stroke-width="0.8"/></svg>复制</div>
<div class="a ob c" style="left:1002.8px;top:431.86px;background:#08a0fe"><svg width="11" height="11" viewBox="0 0 11 11" style="margin-right:3.5px;margin-left:1.5px"><path d="M1.6 9.8 L1.7 7.4 L6.6 1.2 L8.6 2.8 L3.7 9 Z" fill="none" stroke="#fff" stroke-width="1.1"/><path d="M5.2 10 H9.6" stroke="#fff" stroke-width="1.1"/></svg>修改</div>
<div class="a ob c" style="left:1066.1px;top:431.86px;background:#fe5f63"><svg width="10" height="11" viewBox="0 0 10 11" style="margin-right:3.5px;margin-left:1.5px"><g fill="none" stroke="#fff" stroke-width="1.1"><path d="M0.5 2.3 H9.5 M3.5 2.3 V0.8 H6.5 V2.3 M1.7 2.3 V10.3 H8.3 V2.3 M4 4.3 V8.3 M6 4.3 V8.3"/></g></svg>删除</div>
<div class="a ob c" style="left:1128.9px;top:431.86px;background:#f49e36"><svg width="11" height="8" viewBox="0 0 11 8" style="margin-right:4px;margin-left:1.5px"><path d="M0.6 4 C2 1.4 3.8 0.7 5.5 0.7 C7.2 0.7 9 1.4 10.4 4 C9 6.6 7.2 7.3 5.5 7.3 C3.8 7.3 2 6.6 0.6 4 Z" fill="none" stroke="#fff" stroke-width="1.1"/><circle cx="5.5" cy="4" r="1.8" fill="none" stroke="#fff" stroke-width="1.1"/></svg>路径</div>
<div class="a ob c" style="left:1192px;top:431.86px;background:#8e9097"><svg width="11" height="8" viewBox="0 0 11 8" style="margin-right:4px;margin-left:1.5px"><path d="M0.6 4 C2 1.4 3.8 0.7 5.5 0.7 C7.2 0.7 9 1.4 10.4 4 C9 6.6 7.2 7.3 5.5 7.3 C3.8 7.3 2 6.6 0.6 4 Z" fill="none" stroke="#fff" stroke-width="1.1"/><circle cx="5.5" cy="4" r="1.8" fill="none" stroke="#fff" stroke-width="1.1"/></svg>详情</div>
<div class="a ob c" style="left:1255px;top:431.86px;background:#35c44a"><svg width="11" height="11" viewBox="0 0 11 11" style="margin-right:4.5px;margin-left:1.5px"><path d="M3 1 H10 V8.5 H8.5" fill="none" stroke="#fff" stroke-width="1"/><rect x="1" y="3" width="7" height="7.2" fill="none" stroke="#fff" stroke-width="1"/><path d="M3 5.5 H6 M3 7.3 H6" stroke="#fff" stroke-width="0.8"/></svg>复制</div>
<div class="a" style="left:208.2px;top:463.7px;width:1116.3px;height:8.4px;background:#c1c4c9"></div>
<div class="a" style="left:208.7px;top:463.7px;width:997.3px;height:8.4px;background:#979797;border-radius:4px"></div>
<div class="a" style="left:992px;top:469px;width:332.5px;height:1px;background:rgba(255,255,255,0.8)"></div>
<div class="a vl" style="left:1324.0px;top:224.3px;height:247.8px"></div>
<div class="a" style="left:211.5px;top:492px;height:18px;line-height:18px;font-size:13px;color:#606266;white-space:nowrap;word-spacing:-1.5px">共 5 条</div>
<div class="a inp" style="left:263.3px;top:488.2px;width:89.2px;height:24.4px;color:#606266;font-size:13px"><span style="padding-left:16.5px">20条/页</span><svg class="chev" style="right:9.5px;margin-top:-1.5px" width="11" height="7" viewBox="0 0 11 7"><path d="M0.7 0.7 L5.5 5.8 L10.3 0.7" fill="none" stroke="#c0c4cc" stroke-width="1"/></svg></div>
<div class="a c" style="left:370.9px;top:488.2px;width:26.9px;height:24.4px;background:#f4f4f5;border-radius:2px"><svg width="6" height="10" viewBox="0 0 6 10"><path d="M5 1 L1 5 L5 9" fill="none" stroke="#c0c4cc" stroke-width="1.2"/></svg></div>
<div class="a c" style="left:407.1px;top:488.2px;width:26.7px;height:24.4px;background:#0aa1fe;border-radius:2px;color:#fff;font-weight:bold;font-size:13px">1</div>
<div class="a c" style="left:443px;top:488.2px;width:26.7px;height:24.4px;background:#f4f4f5;border-radius:2px"><svg width="6" height="10" viewBox="0 0 6 10"><path d="M1 1 L5 5 L1 9" fill="none" stroke="#c0c4cc" stroke-width="1.2"/></svg></div>
<div class="a" style="left:496px;top:492px;height:18px;line-height:18px;font-size:13px;color:#606266;white-space:nowrap">前往</div>
<div class="a c" style="left:523.5px;top:489.2px;width:40px;height:24.2px;border:1px solid #dcdfe6;border-radius:3px;font-size:13px;color:#606266;padding-bottom:2.5px">1</div>
<div class="a" style="left:568px;top:492px;height:18px;line-height:18px;font-size:13px;color:#606266;white-space:nowrap">页</div>
</body></html>
